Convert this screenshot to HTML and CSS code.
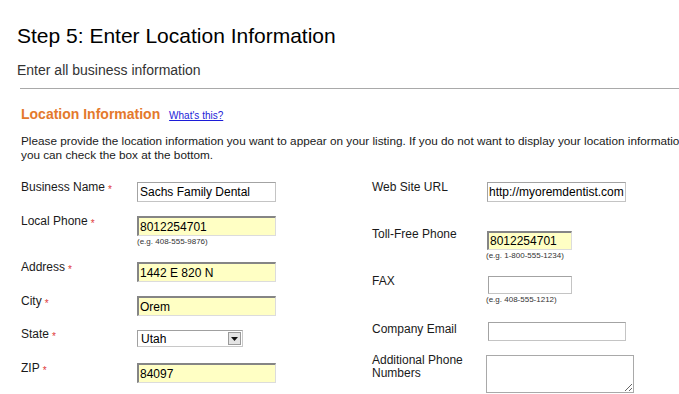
FILE: index.html
```html
<!DOCTYPE html>
<html lang="en">
<head>
<meta charset="utf-8">
<title>Step 5: Enter Location Information</title>
<link rel="stylesheet" href="styles.css">
</head>
<body>
<div class="page">
  <h1 class="title">Step 5: Enter Location Information</h1>
  <p class="subtitle">Enter all business information</p>
  <hr class="rule">
  <section class="section">
    <h2 class="section-title">Location Information <a href="#" class="help">What's this?</a></h2>
    <p class="intro">Please provide the location information you want to appear on your listing. If you do not want to display your location information you can check the box at the bottom.</p>
    <div class="form">
      <div class="grid grid-left">
        <label class="label">Business Name<span class="req">*</span></label>
        <div class="ctl"><input class="input input-white w-139" value="Sachs Family Dental"></div>

        <label class="label">Local Phone<span class="req">*</span></label>
        <div class="ctl"><input class="input input-yellow w-139" value="8012254701"><div class="hint">(e.g. 408-555-9876)</div></div>

        <label class="label">Address<span class="req">*</span></label>
        <div class="ctl"><input class="input input-yellow w-139" value="1442 E 820 N"></div>

        <label class="label">City<span class="req">*</span></label>
        <div class="ctl"><input class="input input-yellow w-139" value="Orem"></div>

        <label class="label">State<span class="req">*</span></label>
        <div class="ctl ctl-select">
          <div class="select"><span class="select-value">Utah</span><span class="select-btn"><svg width="7" height="4" viewBox="0 0 7 4"><path d="M0 0h7L3.5 4z" fill="#111"/></svg></span></div>
        </div>

        <label class="label">ZIP<span class="req">*</span></label>
        <div class="ctl"><input class="input input-yellow w-139" value="84097"></div>
      </div>

      <div class="grid grid-right">
        <label class="label">Web Site URL</label>
        <div class="ctl"><input class="input input-white input-tight w-139" value="http://myoremdentist.com"></div>

        <label class="label">Toll-Free Phone</label>
        <div class="ctl ctl-toll"><input class="input input-yellow w-85 h-19" value="8012254701"><div class="hint hint-right">(e.g. 1-800-555-1234)</div></div>

        <label class="label">FAX</label>
        <div class="ctl ctl-shift"><input class="input input-white w-84 h-18" value=""><div class="hint hint-fax">(e.g. 408-555-1212)</div></div>

        <label class="label">Company Email</label>
        <div class="ctl ctl-shift ctl-top"><input class="input input-white w-138 h-19" value=""></div>

        <label class="label label-multi">Additional Phone<br>Numbers</label>
        <div class="ctl ctl-area"><textarea class="area"></textarea></div>
      </div>
    </div>
  </section>
</div>
</body>
</html>
```

FILE: styles.css
```css
html, body {
  margin: 0;
  padding: 0;
  overflow: hidden;
  background: #ffffff;
}

body {
  font-family: "Liberation Sans", Arial, sans-serif;
  color: #1a1a1a;
  width: 679px;
  height: 394px;
}

.page {
  padding-left: 17px;
}

.title {
  margin: 24px 0 0;
  font-size: 21px;
  line-height: 24px;
  font-weight: normal;
  color: #000;
}

.subtitle {
  margin: 14px 0 0;
  font-size: 14px;
  line-height: 16px;
  color: #333;
}

.rule {
  margin: 10px 0 0 3px;
  border: 0;
  border-top: 1px solid #a9a9a9;
  height: 0;
}

.section {
  margin-left: 4px;
  width: 676px;
}

.section-title {
  margin: 17px 0 0;
  font-size: 14px;
  line-height: 16px;
  font-weight: bold;
  color: #e4792c;
}

.help {
  margin-left: 5px;
  font-size: 10px;
  font-weight: normal;
  color: #1c1cd8;
  text-decoration: underline;
}

.intro {
  margin: 10px 0 0;
  font-size: 11.75px;
  line-height: 14px;
  color: #1a1a1a;
}

.form {
  display: flex;
  margin-top: 18px;
}

.grid {
  display: grid;
  align-content: start;
}

.grid-left {
  width: 351px;
  grid-template-columns: 116px 1fr;
  grid-template-rows: 34px 46px 34px 33px 34px auto;
}

.grid-right {
  grid-template-columns: 115px 1fr;
  grid-template-rows: 47px 47px 48px 32px auto;
}

.label {
  font-size: 12px;
  line-height: 14px;
  color: #1a1a1a;
}

.label-multi {
  line-height: 13px;
}

.req {
  color: #e03a3a;
  font-size: 10px;
  margin-left: 3px;
  vertical-align: -2px;
}

.ctl {
  padding-top: 2px;
}

.ctl-select {
  padding-top: 3px;
}

.ctl-toll {
  padding-top: 4px;
}

.ctl-shift {
  padding-left: 1px;
}

.ctl-top {
  padding-top: 0;
}

.ctl-area {
  padding-top: 1px;
  margin-left: -1px;
}

.input {
  display: block;
  box-sizing: border-box;
  height: 20px;
  margin: 0;
  font-family: "Liberation Sans", Arial, sans-serif;
  font-size: 12px;
  color: #000;
  outline: none;
}

.input-white {
  background: #fff;
  border: 1px solid #a3a3a3;
  border-right-color: #c4c4c4;
  border-bottom-color: #c4c4c4;
  padding: 0 2px;
}

.input-tight {
  padding: 0 1px;
}

.input-yellow {
  background: #ffffc4;
  border-style: solid;
  border-color: #858585 #dcdcdc #dcdcdc #858585;
  border-width: 2px 1px 1px 2px;
  padding: 0 1px;
}

.w-139 { width: 139px; }
.w-138 { width: 138px; }
.w-85 { width: 85px; }
.w-84 { width: 84px; }
.h-19 { height: 19px; }
.h-18 { height: 18px; }

.hint {
  font-size: 8px;
  line-height: 12px;
  color: #333;
}

.hint-right {
  margin-left: -1px;
}

.hint-fax {
  margin-left: -2px;
}

.select {
  box-sizing: border-box;
  width: 106px;
  height: 17px;
  display: flex;
  align-items: center;
  justify-content: space-between;
  border: 1px solid #a0a0a0;
  border-right-color: #c8c8c8;
  border-bottom-color: #c8c8c8;
  background: #fff;
  padding: 0 1px 0 3px;
  font-size: 12px;
  color: #000;
}

.select-btn {
  box-sizing: border-box;
  width: 13px;
  height: 13px;
  display: flex;
  align-items: center;
  justify-content: center;
  background: #e4e4e4;
  border: 1px solid #9a9a9a;
}

.area {
  display: block;
  box-sizing: border-box;
  width: 148px;
  height: 38px;
  margin: 0;
  border: 1px solid #a9a9a9;
  background: #fff;
  resize: both;
  font-family: "Liberation Sans", Arial, sans-serif;
  font-size: 12px;
}
```
